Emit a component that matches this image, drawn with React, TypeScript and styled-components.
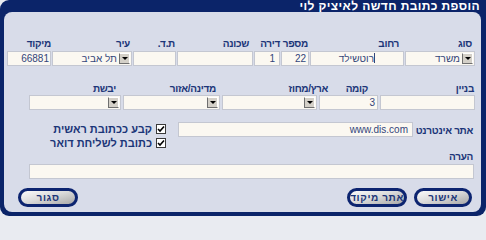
import React from 'react';
import styled, { createGlobalStyle } from 'styled-components';

const GlobalStyle = createGlobalStyle`
  html, body {
    margin: 0;
    padding: 0;
    background: #e9ebf1;
  }
  body {
    font-family: "Liberation Sans", Arial, sans-serif;
  }
`;

const Frame = styled.div`
  width: 486px;
  height: 216px;
  box-sizing: border-box;
  background: #0b2469;
  border-radius: 9px 0 9px 9px;
  padding: 0 5px 4px 4px;
  display: flex;
  flex-direction: column;
  direction: rtl;
`;

const TitleBar = styled.div`
  height: 12px;
  line-height: 13px;
  padding-right: 1px;
  color: #ffffff;
  font-weight: 700;
  font-size: 12px;
  letter-spacing: 0.4px;
  white-space: nowrap;
`;

const Panel = styled.div`
  flex: 1;
  background: #d8dce9;
  border-radius: 8px;
  padding: 26px 6px 0 3px;
  display: flex;
  flex-direction: column;
  box-sizing: border-box;
`;

const Row = styled.div<{ $gap?: number; $top?: number }>`
  display: flex;
  align-items: flex-start;
  gap: ${p => p.$gap ?? 1}px;
  margin-top: ${p => p.$top ?? 0}px;
`;

const Field = styled.div<{ $w: number; $gap?: number }>`
  width: ${p => p.$w}px;
  display: flex;
  flex-direction: column;
  gap: ${p => p.$gap ?? 2}px;
`;

const NoteField = styled(Field)`
  margin-top: 3px;
  margin-right: 1px;
`;

const Label = styled.div<{ $inset?: number }>`
  font-size: 10px;
  line-height: 11px;
  height: 11px;
  font-weight: 700;
  letter-spacing: -0.3px;
  color: #1b3578;
  white-space: nowrap;
  padding-right: ${p => Math.max(p.$inset ?? 2, 0)}px;
  margin-right: ${p => Math.min(p.$inset ?? 2, 0)}px;
`;

const TextBox = styled.div<{ $w?: number; $pad?: number }>`
  height: 15px;
  box-sizing: border-box;
  ${p => (p.$w ? `width: ${p.$w}px;` : '')}
  background: #fbf8f1;
  border: 1px solid #c4c7d1;
  font-size: 10px;
  line-height: 13px;
  padding: 0 ${p => p.$pad ?? 2}px 0 2px;
  color: #33457a;
  white-space: nowrap;
  overflow: hidden;
`;

const Caret = styled.span`
  display: inline-block;
  width: 1px;
  height: 10px;
  margin-right: 1px;
  vertical-align: -1px;
  background: #33457a;
`;

const SelectBox = styled(TextBox)`
  display: flex;
  align-items: center;
  gap: 2px;
  padding: 0 1px 0 3px;
`;

const ArrowButton = styled.span`
  width: 11px;
  height: 11px;
  box-sizing: border-box;
  flex: none;
  background: #d4d0c8;
  border-top: 1px solid #ffffff;
  border-right: 1px solid #ffffff;
  border-bottom: 1px solid #6f6f6f;
  border-left: 1px solid #6f6f6f;
  display: flex;
  align-items: center;
  justify-content: center;

  &::after {
    content: '';
    border-left: 3px solid transparent;
    border-right: 3px solid transparent;
    border-top: 3px solid #000000;
  }
`;

const SideLabel = styled(Label)`
  width: 56px;
  flex: none;
  margin-top: 3px;
`;

const CheckGroup = styled.div`
  margin-right: 8px;
  margin-top: 2px;
  display: flex;
  flex-direction: column;
  gap: 4px;
`;

const CheckItem = styled.div`
  display: flex;
  align-items: center;
  gap: 4px;
  font-size: 11px;
  line-height: 10px;
  font-weight: 700;
  color: #1b3578;
  white-space: nowrap;
`;

const CheckBox = styled.span`
  width: 10px;
  height: 10px;
  box-sizing: border-box;
  border: 1px solid #3a3a3a;
  background: #ffffff;
  display: flex;
  align-items: center;
  justify-content: center;
  flex: none;
`;

const Buttons = styled.div`
  margin-top: 9px;
  display: flex;
  gap: 7px;
  padding-right: 3px;
`;

const PillButton = styled.button<{ $w: number; $push?: boolean }>`
  width: ${p => p.$w}px;
  height: 19px;
  box-sizing: border-box;
  border: 3px solid #0c2470;
  border-radius: 10px;
  background: linear-gradient(165deg, #fbfbfb 0%, #dcdcdc 45%, #a7a7a7 100%);
  color: #1b3578;
  font-family: "Liberation Sans", Arial, sans-serif;
  font-size: 10px;
  font-weight: 700;
  letter-spacing: 0.6px;
  white-space: nowrap;
  padding: 0;
  line-height: 13px;
  ${p => (p.$push ? 'margin-right: auto; margin-left: 11px;' : '')}
`;

const Check = () => (
  <CheckBox>
    <svg width="8" height="8" viewBox="0 0 8 8">
      <path d="M1 4 L3 6 L7 1.5" fill="none" stroke="#000" strokeWidth="1.6" />
    </svg>
  </CheckBox>
);

const Select = ({ value }: { value?: string }) => (
  <SelectBox>
    <ArrowButton />
    <span>{value}</span>
  </SelectBox>
);

const App: React.FC = () => (
  <>
    <GlobalStyle />
    <Frame>
      <TitleBar>הוספת כתובת חדשה לאיציק לוי</TitleBar>
      <Panel>
        <Row>
          <Field $w={70}>
            <Label $inset={3}>סוג</Label>
            <Select value="משרד" />
          </Field>
          <Field $w={94}>
            <Label $inset={5}>רחוב</Label>
            <TextBox $pad={27}>
              <Caret />
              רוטשילד
            </TextBox>
          </Field>
          <Field $w={28}>
            <Label $inset={1}>מספר</Label>
            <TextBox>22</TextBox>
          </Field>
          <Field $w={26}>
            <Label $inset={0}>דירה</Label>
            <TextBox $pad={4}>1</TextBox>
          </Field>
          <Field $w={76}>
            <Label $inset={4}>שכונה</Label>
            <TextBox />
          </Field>
          <Field $w={43}>
            <Label $inset={1}>ת.ד.</Label>
            <TextBox />
          </Field>
          <Field $w={80}>
            <Label $inset={2}>עיר</Label>
            <Select value="תל אביב" />
          </Field>
          <Field $w={44}>
            <Label $inset={0}>מיקוד</Label>
            <TextBox $pad={1}>66881</TextBox>
          </Field>
        </Row>

        <Row $top={17} $gap={2}>
          <Field $w={95} $gap={1}>
            <Label $inset={1}>בניין</Label>
            <TextBox />
          </Field>
          <Field $w={59} $gap={1}>
            <Label $inset={10}>קומה</Label>
            <TextBox>3</TextBox>
          </Field>
          <Field $w={95} $gap={1}>
            <Label $inset={-11}>ארץ/מחוז</Label>
            <Select />
          </Field>
          <Field $w={97} $gap={1}>
            <Label $inset={4}>מדינה/אזור</Label>
            <Select />
          </Field>
          <Field $w={92} $gap={1}>
            <Label $inset={5}>יבשת</Label>
            <Select />
          </Field>
        </Row>

        <Row $top={12} $gap={4}>
          <SideLabel $inset={2}>אתר אינטרנט</SideLabel>
          <TextBox $w={235} $pad={4}>www.dis.com</TextBox>
          <CheckGroup>
            <CheckItem>
              <Check />
              קבע ככתובת ראשית
            </CheckItem>
            <CheckItem>
              <Check />
              כתובת לשליחת דואר
            </CheckItem>
          </CheckGroup>
        </Row>

        <NoteField $w={445} $gap={2}>
          <Label $inset={1}>הערה</Label>
          <TextBox />
        </NoteField>

        <Buttons>
          <PillButton $w={58}>אישור</PillButton>
          <PillButton $w={60}>אתר מיקוד</PillButton>
          <PillButton $w={60} $push>
            סגור
          </PillButton>
        </Buttons>
      </Panel>
    </Frame>
  </>
);

export default App;
